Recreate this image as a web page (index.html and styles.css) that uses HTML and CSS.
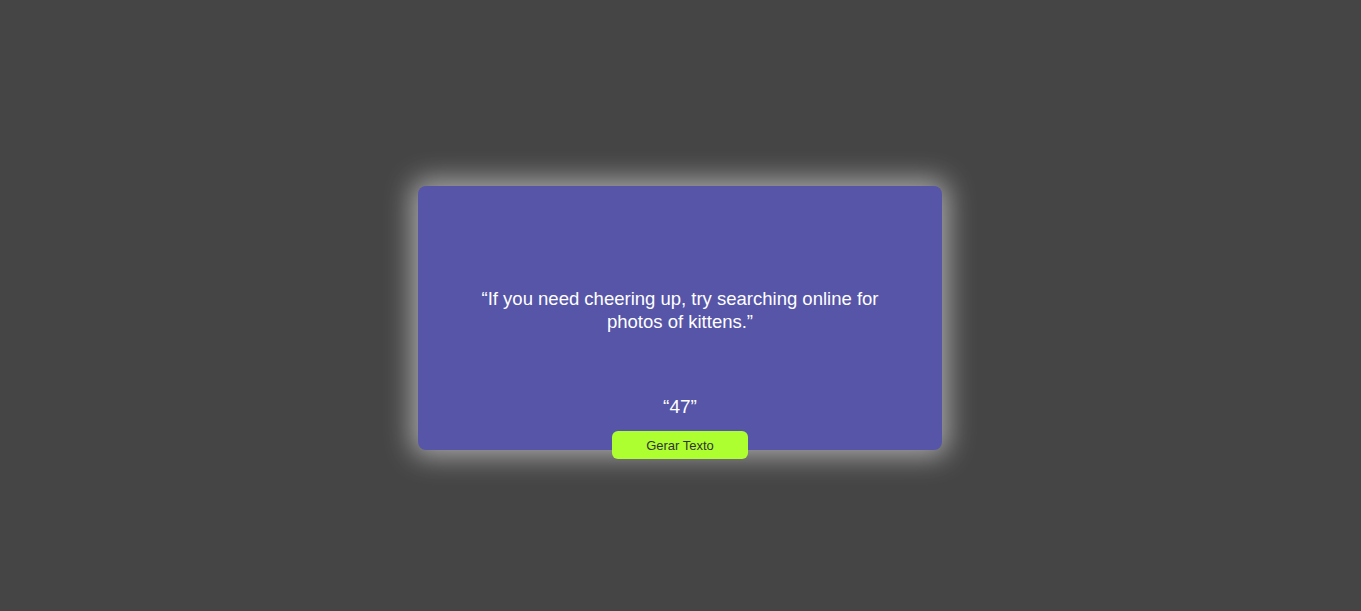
FILE: index.html
```html
<!DOCTYPE html>
<html lang="pt">
<head>
<meta charset="utf-8">
<title>Gerador de Texto</title>
<link rel="stylesheet" href="styles.css">
</head>
<body>
<main class="page">
  <section class="card">
    <div class="quote-area">
      <p class="quote">“If you need cheering up, try searching online for photos of kittens.”</p>
    </div>
    <p class="number">“47”</p>
    <button class="btn" type="button">Gerar Texto</button>
  </section>
</main>
</body>
</html>
```

FILE: styles.css
```css
* { box-sizing: border-box; }
html, body { height: 100%; }
body {
  margin: 0;
  background: #454545;
  font-family: "Liberation Sans", Arial, sans-serif;
}
.page {
  height: 100%;
  display: flex;
  align-items: center;
  justify-content: center;
  padding-right: 1px;
}
.card {
  width: 524px;
  height: 264px;
  margin-top: 25px;
  background: #5655a8;
  border-radius: 8px;
  box-shadow: 0 0 28px 6px rgba(255, 255, 255, 0.55);
  display: flex;
  flex-direction: column;
  align-items: center;
  padding-top: 39px;
}
.quote-area {
  flex: 1;
  display: flex;
  align-items: center;
  justify-content: center;
  padding: 0 45px;
}
.quote {
  margin: 0;
  color: #ffffff;
  font-size: 18.5px;
  line-height: 23px;
  text-align: center;
}
.number {
  margin: 0 0 13px;
  color: #ffffff;
  font-size: 19px;
  line-height: 23px;
}
.btn {
  width: 136px;
  height: 28px;
  margin-bottom: -9px;
  border: none;
  border-radius: 6px;
  background: #adff2f;
  color: #333333;
  font-family: "Liberation Sans", Arial, sans-serif;
  font-size: 13px;
  padding: 0;
}
```
